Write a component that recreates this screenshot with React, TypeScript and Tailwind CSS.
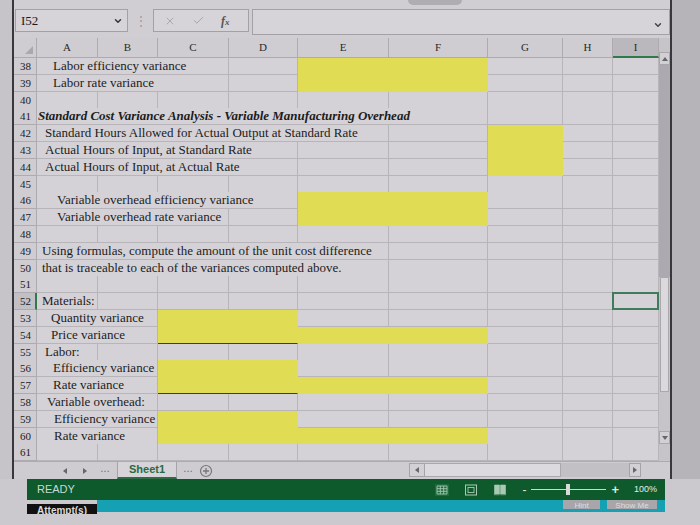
import React from 'react';
import { ChevronDown, X, Check } from 'lucide-react';

type Cell = { s?: number; t?: string; y?: boolean; yb?: boolean; bb?: boolean; sel?: boolean };
type Row = { n: number; pl?: string; b?: boolean; hl?: boolean; c: Cell[] };

const spans: Record<number, string> = {
  1: '',
  2: 'col-span-2',
  3: 'col-span-3',
  4: 'col-span-4',
  5: 'col-span-5',
  6: 'col-span-6',
};

const cols = 'grid grid-cols-[23px_61px_60px_71px_69px_91px_99px_75px_50px_46px]';
const empty = (k: number): Cell[] => Array.from({ length: k }, () => ({}));

const rows: Row[] = [
  { n: 38, pl: 'pl-[16px]', c: [{ s: 3, t: 'Labor efficiency variance' }, {}, { s: 2, y: true }, {}, {}, {}] },
  { n: 39, pl: 'pl-[16px]', c: [{ s: 3, t: 'Labor rate variance' }, {}, { s: 2, y: true }, {}, {}, {}] },
  { n: 40, c: empty(9) },
  {
    n: 41,
    pl: 'pl-[1px]',
    b: true,
    c: [{ s: 6, t: 'Standard Cost Variance Analysis - Variable Manufacturing Overhead' }, {}, {}, {}],
  },
  {
    n: 42,
    pl: 'pl-[8px]',
    c: [{ s: 5, t: 'Standard Hours Allowed for Actual Output at Standard Rate' }, {}, { y: true }, {}, {}],
  },
  { n: 43, pl: 'pl-[8px]', c: [{ s: 4, t: 'Actual Hours of Input, at Standard Rate' }, {}, {}, { y: true }, {}, {}] },
  { n: 44, pl: 'pl-[8px]', c: [{ s: 4, t: 'Actual Hours of Input, at Actual Rate' }, {}, {}, { y: true }, {}, {}] },
  { n: 45, c: empty(9) },
  { n: 46, pl: 'pl-[20px]', c: [{ s: 4, t: 'Variable overhead efficiency variance' }, { s: 2, y: true }, {}, {}, {}] },
  { n: 47, pl: 'pl-[20px]', c: [{ s: 3, t: 'Variable overhead rate variance' }, {}, { s: 2, y: true }, {}, {}, {}] },
  { n: 48, c: empty(9) },
  {
    n: 49,
    pl: 'pl-[5px]',
    c: [{ s: 5, t: 'Using formulas, compute the amount of the unit cost difference' }, {}, {}, {}, {}],
  },
  {
    n: 50,
    pl: 'pl-[5px]',
    c: [{ s: 5, t: 'that is traceable to each of the variances computed above.' }, {}, {}, {}, {}],
  },
  { n: 51, c: empty(9) },
  { n: 52, pl: 'pl-[5px]', hl: true, c: [{ t: 'Materials:' }, {}, {}, {}, {}, {}, {}, {}, { sel: true }] },
  { n: 53, pl: 'pl-[14px]', c: [{ s: 2, t: 'Quantity variance' }, { s: 2, y: true }, {}, {}, {}, {}, {}] },
  { n: 54, pl: 'pl-[14px]', c: [{ s: 2, t: 'Price variance' }, { s: 2, y: true, bb: true }, { s: 2, y: true }, {}, {}, {}] },
  { n: 55, pl: 'pl-[8px]', c: [{ t: 'Labor:' }, {}, {}, {}, {}, {}, {}, {}, {}] },
  { n: 56, pl: 'pl-[16px]', c: [{ s: 2, t: 'Efficiency variance' }, { s: 2, y: true }, {}, {}, {}, {}, {}] },
  { n: 57, pl: 'pl-[16px]', c: [{ s: 2, t: 'Rate variance' }, { s: 2, y: true, bb: true }, { s: 2, y: true }, {}, {}, {}] },
  { n: 58, pl: 'pl-[10px]', c: [{ s: 2, t: 'Variable overhead:' }, {}, {}, {}, {}, {}, {}, {}] },
  { n: 59, pl: 'pl-[17px]', c: [{ s: 2, t: 'Efficiency variance' }, { s: 2, y: true }, {}, {}, {}, {}, {}] },
  {
    n: 60,
    pl: 'pl-[17px]',
    c: [{ s: 2, t: 'Rate variance' }, { s: 2, y: true, bb: true }, { y: true, bb: true }, { y: true }, {}, {}, {}],
  },
  { n: 61, c: empty(9) },
];

function SheetRow({ r }: { r: Row }) {
  return (
    <div className={`${cols} h-[16.8px]`}>
      <div
        className={`border-b border-[#adabb0] text-[11px] leading-[16px] pl-[6px] ${
          r.hl ? 'bg-[#c2c0c5] border-r-2 border-r-[#2f7a4c]' : 'bg-[#cfcdd2] border-r'
        }`}
      >
        {r.n}
      </div>
      {r.c.map((c, i) => {
        const base = c.y
          ? `bg-[#e0dc54] border-r border-b border-r-[#e0dc54] ${c.bb ? 'border-b-[#3d3c2e]' : 'border-b-[#e0dc54]'}`
          : 'bg-[#d4d2d7] border-r border-b border-[#b7b5ba]';
        return (
          <div key={i} className={`${spans[c.s ?? 1]} ${base} relative`}>
            {c.t && (
              <div
                className={`${r.pl ?? ''} whitespace-nowrap text-[13px] leading-[16px] ${
                  r.b ? 'font-bold italic' : ''
                }`}
              >
                {c.t}
              </div>
            )}
            {c.sel && <div className="absolute -inset-px border-2 border-[#3f7c5b]" />}
          </div>
        );
      })}
    </div>
  );
}

const headers = ['A', 'B', 'C', 'D', 'E', 'F', 'G', 'H', 'I'];

function FxIcon() {
  return (
    <span className="italic font-bold text-[12px] text-[#555] leading-none">
      f<span className="text-[9px]">x</span>
    </span>
  );
}

export default function App() {
  return (
    <div className="w-[700px] h-[525px] bg-[#cbc9cd] overflow-hidden relative font-['Liberation_Serif',serif] text-[#1c1c1c]">
      <div className="absolute left-[408px] top-0 w-[54px] h-[5px] rounded-b-md bg-[#afadb1]" />

      <div className="flex">
        <div className="w-[12px] bg-[#c6c4c8]" />
        <div className="w-[660px] border-l-2 border-r-2 border-[#38373c] bg-[#d0ced2] flex flex-col">
          {/* formula bar */}
          <div className="h-[38px] pt-[9px] flex items-start">
            <div className="ml-[1px] w-[113px] h-[23px] border border-[#a3a1a6] bg-[#d6d4d8] flex items-center justify-between pl-[5px] pr-[4px]">
              <span className="text-[13px]">I52</span>
              <ChevronDown size={10} strokeWidth={3.5} className="text-[#333]" />
            </div>
            <div className="w-[25px] h-[23px] flex items-center justify-center text-[#9c9aa0] text-[12px]">⋮</div>
            <div className="w-[96px] h-[23px] border border-[#a3a1a6] bg-[#d6d4d8] flex items-center pl-[10px] gap-[16px]">
              <X size={12} strokeWidth={1.5} className="text-[#9c9aa0]" />
              <Check size={13} strokeWidth={1.5} className="text-[#9c9aa0]" />
              <FxIcon />
            </div>
            <div className="ml-[3px] w-[418px] h-[26px] border border-[#a3a1a6] bg-[#d6d4d8] flex items-end justify-end pr-[6px] pb-[4px]">
              <ChevronDown size={10} strokeWidth={3.5} className="text-[#444]" />
            </div>
          </div>

          {/* grid + vertical scrollbar */}
          <div className="flex">
            <div className="w-[645px]">
              <div className={`${cols} h-[20px]`}>
                <div className="relative border-r border-b border-[#adabb0] bg-[#cfcdd2]">
                  <div className="absolute right-[3px] bottom-[3px] w-0 h-0 border-l-[8px] border-l-transparent border-b-[8px] border-b-[#aaa8ad]" />
                </div>
                {headers.map((h) => (
                  <div
                    key={h}
                    className={`flex items-center justify-center text-[11px] text-[#2a2a2a] border-r border-[#adabb0] ${
                      h === 'I' ? 'bg-[#bab8bd] border-b-2 border-b-[#2f7a4c]' : 'bg-[#cfcdd2] border-b'
                    }`}
                  >
                    {h}
                  </div>
                ))}
              </div>
              {rows.map((r) => (
                <SheetRow key={r.n} r={r} />
              ))}
            </div>
            <div className="w-[13px] flex flex-col bg-[#c6c4c9]">
              <div className="mt-[14px] h-[13px] border border-[#a9a7ac] bg-[#d2d0d5] flex items-center justify-center">
                <div className="w-0 h-0 border-l-[3px] border-r-[3px] border-b-[4px] border-l-transparent border-r-transparent border-b-[#666]" />
              </div>
              <div className="h-[212px] bg-[#acaab0]" />
              <div className="h-[115px] mx-[1px] border border-[#aaa8ad] bg-[#dbd9de]" />
              <div className="h-[39px]" />
              <div className="h-[13px] border border-[#a9a7ac] bg-[#d2d0d5] flex items-center justify-center">
                <div className="w-0 h-0 border-l-[3px] border-r-[3px] border-t-[4px] border-l-transparent border-r-transparent border-t-[#666]" />
              </div>
            </div>
          </div>

          {/* sheet tabs + horizontal scrollbar */}
          <div className="h-[18px] flex items-start bg-[#cecbd1] border-t border-[#adabb0]">
            <div className="ml-[41px] w-[20px] flex justify-center pt-[6px]">
              <div className="w-0 h-0 border-t-[3px] border-b-[3px] border-r-[4px] border-t-transparent border-b-transparent border-r-[#666]" />
            </div>
            <div className="w-[20px] flex justify-center pt-[6px]">
              <div className="w-0 h-0 border-t-[3px] border-b-[3px] border-l-[4px] border-t-transparent border-b-transparent border-l-[#666]" />
            </div>
            <div className="w-[20px] text-center text-[10px] leading-[14px] text-[#666] font-['Liberation_Sans',sans-serif]">…</div>
            <div className="ml-[2px] w-[60px] h-[17px] border-l border-r border-[#a5a3a8] bg-[#d6d4d9] border-b-2 border-b-[#2f6b45] flex items-center justify-center">
              <span className="text-[11px] font-bold text-[#2b6a41] font-['Liberation_Sans',sans-serif]">Sheet1</span>
            </div>
            <div className="w-[22px] text-center text-[10px] leading-[14px] text-[#666] font-['Liberation_Sans',sans-serif]">…</div>
            <svg width="14" height="14" viewBox="0 0 14 14" className="mt-[2px]">
              <circle cx="7" cy="7" r="5.5" fill="none" stroke="#777" strokeWidth="1.2" />
              <path d="M7 4v6M4 7h6" stroke="#777" strokeWidth="1.3" />
            </svg>
            <div className="ml-[196px] mt-[1px] flex h-[14px]">
              <div className="w-[16px] border border-[#a5a3a8] bg-[#d2d0d5] flex items-center justify-center">
                <div className="w-0 h-0 border-t-[3px] border-b-[3px] border-r-[4px] border-t-transparent border-b-transparent border-r-[#666]" />
              </div>
              <div className="w-[136px] border-t border-b border-r border-[#aaa8ad] bg-[#dcdadf]" />
              <div className="w-[68px] bg-[#c2c0c5]" />
              <div className="w-[12px] border border-[#a5a3a8] bg-[#d2d0d5] flex items-center justify-center">
                <div className="w-0 h-0 border-t-[3px] border-b-[3px] border-l-[4px] border-t-transparent border-b-transparent border-l-[#666]" />
              </div>
            </div>
          </div>
        </div>
        <div className="flex-1 bg-[#b6b4b9]" />
      </div>

      {/* status bar */}
      <div className="ml-[27px] w-[638px] h-[21px] bg-[#0e5a2d] flex items-center font-['Liberation_Sans',sans-serif]">
        <span className="ml-[10px] text-[11px] text-[#c9d9ce]">READY</span>
        <div className="ml-auto flex items-center gap-[15px] text-[#b9d3c0]">
          <svg width="14" height="12" viewBox="0 0 14 12">
            <rect x="0" y="0" width="14" height="12" fill="#1d6a3c" />
            <path d="M2 2h10v8H2zM2 4.7h10M2 7.3h10M5.3 2v8M8.7 2v8" fill="none" stroke="#a9c9b2" strokeWidth="0.9" />
          </svg>
          <svg width="14" height="12" viewBox="0 0 14 12">
            <rect x="1.5" y="1" width="11" height="10" fill="none" stroke="#a9c9b2" strokeWidth="1" />
            <rect x="4" y="3.5" width="6" height="5" fill="none" stroke="#a9c9b2" strokeWidth="0.9" />
          </svg>
          <svg width="14" height="12" viewBox="0 0 14 12">
            <path d="M1.5 1h5v10h-5zM7.5 1h5v10h-5z" fill="#a9c9b2" stroke="#a9c9b2" strokeWidth="0.6" />
            <path d="M1.5 11h11" stroke="#0e5a2d" strokeWidth="1" />
          </svg>
          <div className="flex items-center gap-[5px]">
            <span className="text-[12px] text-[#d9e6dd] leading-none">-</span>
            <div className="relative w-[75px] h-px bg-[#c9dbcf]">
              <div className="absolute left-[35px] -top-[5px] w-[4px] h-[11px] bg-[#d7dcd8]" />
            </div>
            <span className="text-[13px] font-bold text-[#d9e6dd] leading-none">+</span>
          </div>
          <span className="mr-[8px] text-[9px] text-[#e4ece6]">100%</span>
        </div>
      </div>

      {/* exercise footer */}
      <div className="ml-[27px] w-[638px] h-[14px] flex font-['Liberation_Sans',sans-serif]">
        <div className="w-[70px] mt-[4px] h-[10px] bg-[#111] overflow-hidden">
          <div className="pl-[10px] text-[10px] font-bold text-[#dcdcdc] leading-[13px]">Attempt(s)</div>
        </div>
        <div className="flex-1 h-[12px] bg-[#16a0b4] flex justify-end items-start gap-[7px] pr-[8px]">
          <div className="w-[37px] h-[9px] bg-[#a8a6ab] overflow-hidden text-center text-[8px] leading-[12px] text-[#dedede]">Hint</div>
          <div className="w-[50px] h-[9px] bg-[#a8a6ab] overflow-hidden text-center text-[8px] leading-[12px] text-[#dedede]">Show Me</div>
        </div>
      </div>
    </div>
  );
}
